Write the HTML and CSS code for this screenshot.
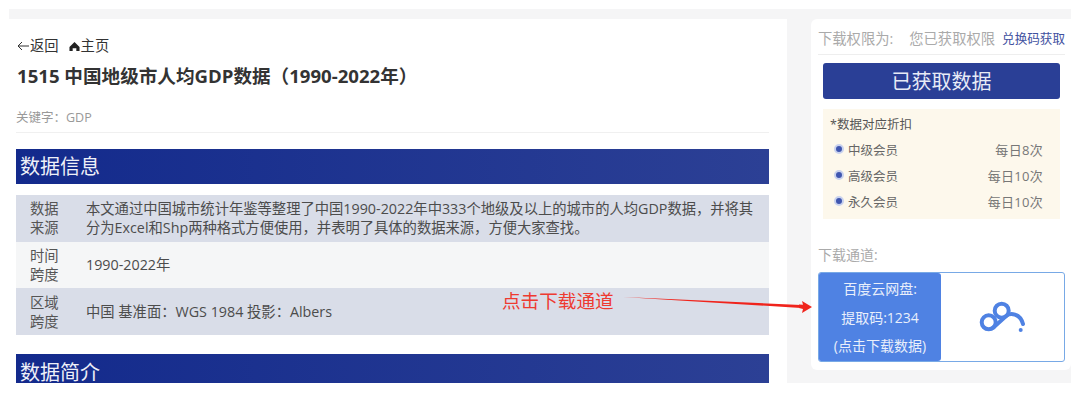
FILE: index.html
```html
<!DOCTYPE html>
<html lang="zh-CN">
<head>
  <meta charset="UTF-8">
  <title>1515 中国地级市人均GDP数据</title>
  <link rel="stylesheet" href="styles.css">
</head>
<body>

<div class="page">

  <!-- 左侧内容 -->
  <div class="main">
    <div class="nav">
      <span class="nav-back"><svg class="back-icon" viewBox="0 0 12 10"><path d="M5 1 L1 5 L5 9 M1 5 H12"/></svg>返回</span>
      <span class="nav-home">
        <svg class="home-icon" viewBox="0 0 12 12"><path d="M6 1 L11.5 6.5 V11 H8 V8 H4 V11 H0.5 V6.5 Z"/></svg>主页
      </span>
    </div>
    <h1>1515 中国地级市人均GDP数据（1990-2022年）</h1>
    <div class="keywords">关键字：GDP</div>

    <h2 class="bar">数据信息</h2>
    <div class="info">
      <div class="info-row alt">
        <div class="info-key">数据<br>来源</div>
        <div class="info-val">本文通过中国城市统计年鉴等整理了中国1990-2022年中333个地级及以上的城市的人均GDP数据，并将其分为Excel和Shp两种格式方便使用，并表明了具体的数据来源，方便大家查找。</div>
      </div>
      <div class="info-row">
        <div class="info-key">时间<br>跨度</div>
        <div class="info-val">1990-2022年</div>
      </div>
      <div class="info-row alt">
        <div class="info-key">区域<br>跨度</div>
        <div class="info-val">中国 基准面：WGS 1984 投影：Albers</div>
      </div>
    </div>

    <h2 class="bar bar-cut">数据简介</h2>
  </div>

  <!-- 右侧下载 -->
  <div class="side">
    <div class="perm">
      <span class="perm-label">下载权限为:</span>
      <span class="perm-state">您已获取权限</span>
      <span class="perm-link">兑换码获取</span>
    </div>
    <div class="got-btn">已获取数据</div>
    <div class="discount">
      <div class="discount-title">*数据对应折扣</div>
      <div class="discount-row"><span class="dot"></span><span class="level">中级会员</span><span class="times">每日8次</span></div>
      <div class="discount-row"><span class="dot"></span><span class="level">高级会员</span><span class="times">每日10次</span></div>
      <div class="discount-row"><span class="dot"></span><span class="level">永久会员</span><span class="times">每日10次</span></div>
    </div>
    <div class="channel-label">下载通道:</div>
    <div class="channel">
      <div class="channel-text">
        <div>百度云网盘:</div>
        <div>提取码:1234</div>
        <div>(点击下载数据)</div>
      </div>
      <div class="channel-icon">
        <svg viewBox="0 0 48 40" width="48" height="40">
          <g fill="none" stroke="#4f82e3" stroke-width="4" stroke-linecap="round">
            <circle cx="9.7" cy="24.3" r="7"/>
            <circle cx="22.7" cy="12.7" r="7"/>
            <path d="M14.4 29.5 L27.4 17.9 C31 14.5 41 15 44 26"/>
          </g>
          <circle cx="41.7" cy="32" r="2" fill="#4f82e3"/>
        </svg>
      </div>
    </div>
  </div>

  <!-- 标注 -->
  <div class="note">点击下载通道</div>
  <svg class="note-arrow" viewBox="0 0 195 24" width="195" height="24">
    <path d="M0 3 L178 11 L178 14 Z" fill="#f0241c"/>
    <path d="M176 10.6 L180 10.8 L179 7 L189 13 L179 19 L180 15 L176 14 Z" fill="#f0241c"/>
  </svg>
</div>

</body>
</html>
```

FILE: styles.css
```css
* {
  box-sizing: border-box;
}
body {
  margin: 0;
  background: #fff;
  font-family: "Open Sans", "Noto Sans CJK SC", sans-serif;
  color: #444;
}
.page {
  position: relative;
  display: flex;
  width: 1062px;
  height: 374px;
  margin: 9px 9px 0;
  padding-top: 10px;
  background: #f5f5f6;
}

/* 左侧 */
.main {
  width: 778px;
  padding: 16px 18px 0 7px;
  background: #fff;
  overflow: hidden;
}
.nav {
  display: flex;
  gap: 10px;
  height: 22px;
  line-height: 22px;
  font-size: 14.3px;
  color: #333;
}
.nav-back {
  display: flex;
  align-items: center;
  margin-left: 1px;
}
.back-icon {
  width: 12px;
  height: 10px;
  fill: none;
  stroke: #333;
  stroke-width: 1;
  margin-right: 1px;
}
.nav-home {
  display: flex;
  align-items: center;
}
.home-icon {
  width: 11px;
  height: 11px;
  fill: #222;
  margin-right: 1px;
}
h1 {
  margin: 7px 0 0 1px;
  height: 24px;
  line-height: 24px;
  font-size: 18.6px;
  font-weight: 700;
  color: #333;
}
.keywords {
  margin-top: 19px;
  height: 26px;
  line-height: 22px;
  font-size: 12.5px;
  color: #999;
  border-bottom: 1px solid #f0f0f0;
}
.bar {
  margin: 16px 0 0;
  height: 35px;
  padding-left: 4px;
  line-height: 36px;
  font-size: 20px;
  font-weight: 400;
  color: #eef0f8;
  background: linear-gradient(90deg, #132a8c, #2c4095);
}
.bar-cut {
  margin-top: 19px;
  height: 29px;
  line-height: 38px;
  overflow: hidden;
}
.info {
  margin-top: 11px;
}
.info-row {
  display: flex;
  align-items: center;
  height: 46.67px;
  background: #f5f6f7;
  font-size: 14.3px;
}
.info-row.alt {
  background: #d9dde8;
}
.info-key {
  width: 70px;
  padding-left: 14px;
  line-height: 19px;
  flex-shrink: 0;
  color: #555;
}
.info-val {
  flex: 1;
  padding-right: 8px;
  line-height: 19px;
  color: #4c4c4c;
}

/* 右侧 */
.side {
  width: 260px;
  height: 351px;
  margin-left: 24px;
  background: #fff;
  border-radius: 6px 0 6px 6px;
  padding: 0 6px 0 7px;
}
.perm {
  display: flex;
  align-items: center;
  height: 36px;
  padding-top: 2px;
  white-space: nowrap;
  font-size: 14.3px;
  color: #aaa;
  border-bottom: 1px solid #eee;
  overflow: hidden;
}
.perm-state {
  margin-left: 16px;
}
.perm-link {
  margin-left: 7px;
  font-size: 12.6px;
  color: #3f519f;
}
.got-btn {
  width: 237px;
  height: 36px;
  margin: 8px 0 0 5px;
  line-height: 37px;
  text-align: center;
  font-size: 20px;
  color: #e8ebf6;
  background: #2a3f96;
  border-radius: 3px;
}
.discount {
  width: 237px;
  height: 110px;
  margin: 10px 0 0 5px;
  padding: 5px 17px 0 7px;
  background: #fdf8ec;
  font-size: 12.5px;
  color: #555;
}
.discount-title {
  height: 22px;
  line-height: 22px;
}
.discount-row {
  display: flex;
  align-items: center;
  height: 26px;
  padding-left: 4px;
  color: #666;
}
.level {
  flex: 1;
  margin-left: 4px;
}
.times {
  font-size: 13px;
  letter-spacing: 0.3px;
  color: #777;
}
.dot {
  width: 10px;
  height: 10px;
  border-radius: 50%;
  background: #3f56b0;
  border: 2px solid #c9d2ee;
}
.channel-label {
  margin-top: 26px;
  height: 20px;
  line-height: 20px;
  font-size: 14px;
  color: #aaa;
}
.channel {
  display: flex;
  width: 247px;
  height: 90px;
  margin-top: 7px;
  border: 1px solid #78a9e6;
  border-radius: 3px;
  overflow: hidden;
}
.channel-text {
  width: 122px;
  padding-top: 2px;
  background: #4f82e3;
  color: #e9effb;
  font-size: 14px;
  text-align: center;
  border-radius: 0 3px 3px 0;
}
.channel-text div {
  height: 28.5px;
  line-height: 28.5px;
  white-space: nowrap;
}
.channel-icon {
  flex: 1;
  display: flex;
  align-items: center;
  justify-content: center;
  padding-top: 2px;
}

/* 标注文字和箭头盖在内容上 */
.note {
  position: absolute;
  left: 493px;
  top: 279px;
  font-size: 18.6px;
  line-height: 26px;
  color: #ee3a30;
}
.note-arrow {
  position: absolute;
  left: 614px;
  top: 285px;
}
```
